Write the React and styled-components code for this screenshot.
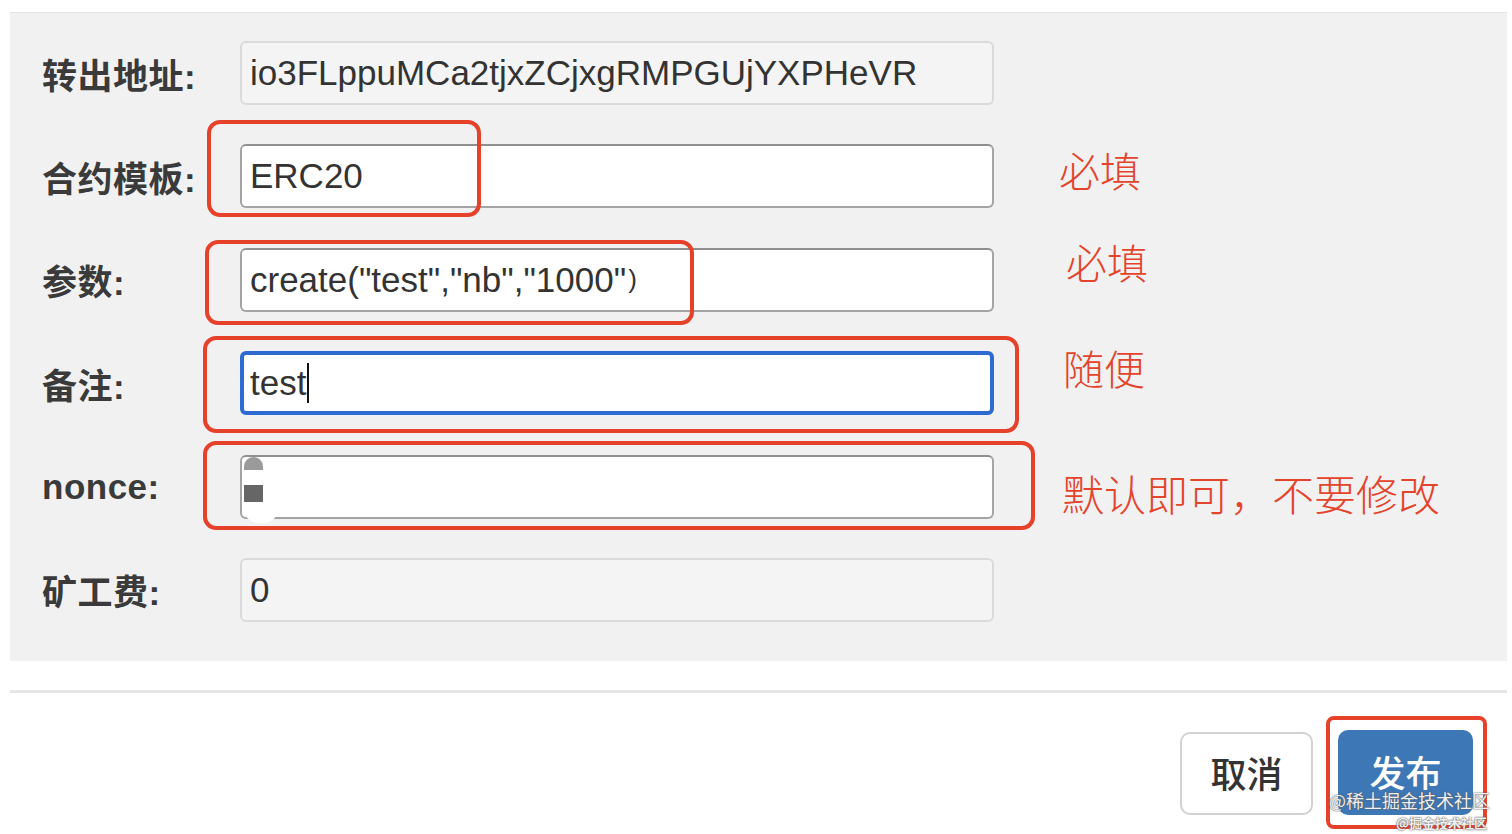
import React from "react"
import styled, { createGlobalStyle } from "styled-components"

const Global = createGlobalStyle`
  html, body {
    margin: 0;
    padding: 0;
    background: #ffffff;
  }
  body {
    font-family: "Liberation Sans", "Noto Sans CJK SC", sans-serif;
    color: #333;
  }
`

const Page = styled.div`
  position: relative;
  width: 1512px;
  height: 834px;
  overflow: hidden;
  background: #fff;
`

const Panel = styled.div`
  margin: 12px 5px 0 10px;
  padding: 28px 0 39px 32px;
  background: #f1f1f1;
  border-top: 1px solid #e4e4e4;
  display: flex;
  flex-direction: column;
  gap: 39.4px;
`

const Row = styled.div`
  position: relative;
  display: flex;
  align-items: center;
  height: 64px;
`

const Label = styled.div`
  width: 198px;
  flex: none;
  font-family: "Liberation Sans", "Noto Sans CJK SC", sans-serif;
  font-weight: 700;
  font-size: 35px;
  color: #3a3a3a;
  letter-spacing: 0.5px;
`

const Field = styled.div`
  position: relative;
  box-sizing: border-box;
  width: 754px;
  height: 64px;
  flex: none;
  display: flex;
  align-items: center;
  padding-left: ${(p) => (p.$focus ? "6px" : "8px")};
  font-family: "Liberation Sans", "Noto Sans CJK SC", sans-serif;
  font-size: 35px;
  color: #333;
  border-radius: 6px;
  background: ${(p) => (p.$readonly ? "#f4f4f4" : "#ffffff")};
  border: ${(p) =>
    p.$focus
      ? "4px solid #2e6bd1"
      : p.$readonly
      ? "2px solid #dadada"
      : "2px solid #a4a4a4"};
  ${(p) => !p.$readonly && !p.$focus && "border-top-color: #8f8f8f;"}
  white-space: nowrap;
`

const Paren = styled.span`
  font-size: 26px;
  margin-left: 2px;
`

const Caret = styled.span`
  display: inline-block;
  width: 2px;
  height: 40px;
  margin-left: 1px;
  background: #111;
`

const Note = styled.div`
  margin-left: ${(p) => p.$x}px;
  transform: translateY(${(p) => p.$dy}px);
  font-family: "Noto Sans CJK SC", sans-serif;
  font-weight: 300;
  font-size: ${(p) => p.$size || 41}px;
  color: #e4432c;
  white-space: nowrap;
`

const Mark = styled.div`
  position: absolute;
  left: ${(p) => p.$l}px;
  top: ${(p) => p.$t}px;
  width: ${(p) => p.$w}px;
  height: ${(p) => p.$h}px;
  box-sizing: border-box;
  border: 4px solid #e5412b;
  border-radius: ${(p) => p.$r || 13}px;
  pointer-events: none;
`

/* redaction blob over the nonce value */
const Blot = styled.div`
  position: absolute;
  left: 1px;
  top: 0;
  width: 36px;
  height: 66px;
  background: #fff;
  border-radius: 4px 12px 16px 16px;

  &::before {
    content: "";
    position: absolute;
    left: 1px;
    top: 0;
    width: 19px;
    height: 13px;
    background: #9a9a9a;
    border-radius: 10px 10px 0 0;
  }
  &::after {
    content: "";
    position: absolute;
    left: 1px;
    top: 28px;
    width: 19px;
    height: 17px;
    background: #666;
  }
`

const Divider = styled.div`
  margin: 29px 5px 0 10px;
  height: 3px;
  background: #e6e6e6;
`

const Footer = styled.div`
  display: flex;
  justify-content: flex-end;
  align-items: flex-end;
  gap: 25px;
  padding: 37px 39px 0 0;
`

const Button = styled.div`
  position: relative;
  box-sizing: border-box;
  width: ${(p) => (p.$primary ? "135px" : "133px")};
  height: ${(p) => (p.$primary ? "85px" : "83px")};
  display: flex;
  align-items: center;
  justify-content: center;
  padding-bottom: 3px;
  border-radius: 10px;
  font-family: "Noto Sans CJK SC", sans-serif;
  font-weight: 500;
  font-size: 36px;
  color: ${(p) => (p.$primary ? "#fff" : "#333")};
  background: ${(p) => (p.$primary ? "#3d77b6" : "#fff")};
  border: ${(p) => (p.$primary ? "none" : "2px solid #d2d2d2")};
`

const Watermark = styled.div`
  position: absolute;
  right: ${(p) => p.$r}px;
  top: ${(p) => p.$t}px;
  font-family: "Noto Sans CJK SC", sans-serif;
  font-size: ${(p) => p.$size}px;
  font-weight: ${(p) => p.$weight};
  color: rgba(255, 255, 255, 0.92);
  text-shadow: 0 0 1px #555, 0 0 2px #666;
  white-space: nowrap;
`

const rows = [
  { label: "转出地址:", value: "io3FLppuMCa2tjxZCjxgRMPGUjYXPHeVR", readonly: true },
  {
    label: "合约模板:",
    value: "ERC20",
    note: { text: "必填", x: 65, dy: -7 },
    mark: { l: -33, t: -24, w: 274, h: 97 },
  },
  {
    label: "参数:",
    value: 'create("test","nb","1000"',
    paren: true,
    note: { text: "必填", x: 72, dy: -19 },
    mark: { l: -35, t: -8, w: 489, h: 85 },
  },
  {
    label: "备注:",
    value: "test",
    focus: true,
    note: { text: "随便", x: 69, dy: -16 },
    mark: { l: -37, t: -15, w: 816, h: 97 },
  },
  {
    label: "nonce:",
    value: "",
    blot: true,
    note: { text: "默认即可，不要修改", x: 68, dy: 6, size: 42 },
    mark: { l: -37, t: -14, w: 832, h: 89 },
  },
  { label: "矿工费:", value: "0", readonly: true },
]

export default function App() {
  return (
    <Page>
      <Global />
      <Panel>
        {rows.map((r) => (
          <Row key={r.label}>
            <Label>{r.label}</Label>
            <Field $readonly={r.readonly} $focus={r.focus}>
              {r.value}
              {r.paren && <Paren>)</Paren>}
              {r.focus && <Caret />}
              {r.blot && <Blot />}
            </Field>
            {r.note && (
              <Note $x={r.note.x} $dy={r.note.dy} $size={r.note.size}>
                {r.note.text}
              </Note>
            )}
            {r.mark && (
              <Mark
                $l={198 + r.mark.l}
                $t={r.mark.t}
                $w={r.mark.w}
                $h={r.mark.h}
              />
            )}
          </Row>
        ))}
      </Panel>
      <Divider />
      <Footer>
        <Button>取消</Button>
        <Button $primary>
          发布
          <Mark $l={-12} $t={-14} $w={161} $h={113} $r={8} />
        </Button>
      </Footer>
      <Watermark $r={22} $t={787} $size={18} $weight={400}>
        @稀土掘金技术社区
      </Watermark>
      <Watermark $r={25} $t={813} $size={13} $weight={700}>
        @掘金技术社区
      </Watermark>
    </Page>
  )
}
